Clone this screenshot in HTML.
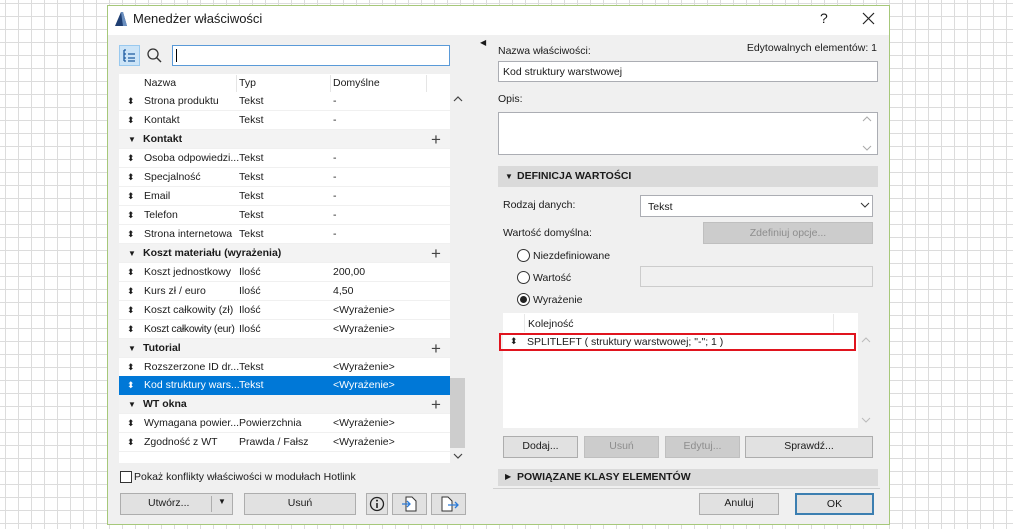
<!DOCTYPE html>
<html><head><meta charset="utf-8">
<style>
*{box-sizing:border-box;margin:0;padding:0}
body{width:1013px;height:529px;overflow:hidden;position:relative;font-family:"Liberation Sans",sans-serif;font-size:10.5px;color:#1a1a1a;
background-color:#fff;background-image:linear-gradient(#dcdcdc 1px,transparent 1px),linear-gradient(90deg,#dcdcdc 1px,transparent 1px);background-size:13px 13px;background-position:5px 3px}
.a{position:absolute}
.dlg{left:107px;top:5px;width:783px;height:520px;background:#f0f0f0;border:1px solid #a6c87a}
.title{left:0;top:0;width:781px;height:29px;background:#fff}
.btn{position:absolute;background:#e1e1e1;border:1px solid #adadad;text-align:center;line-height:19px;font-size:10.5px}
.dis{background:#cccccc;border-color:#bfbfbf;color:#8d8d8d}
.row{position:absolute;left:119px;width:331px;height:19px;background:#fff;border-bottom:1px solid #f0f0f0;line-height:19px}
.row span{position:absolute;white-space:nowrap}
.grp{background:#f3f3f3;font-weight:bold}
.ud{left:8px;font-size:9px;top:0}
.inp{position:absolute;background:#fff;border:1px solid #abadb3}
.sec{position:absolute;background:#dadada;font-weight:bold;line-height:21px;font-size:10.5px}
.rad{position:absolute;width:13px;height:13px;border:1px solid #333;border-radius:50%;background:#fff}
</style></head><body>
<div class="a dlg">
 <div class="a title"></div>
</div>
<svg class="a" style="left:114px;top:11px" width="14" height="16"><path d="M1 15 L7 1 L9 1 L13 15 Z" fill="#1f3f73"/><path d="M7 1 L9 1 L13 15 L9 15Z" fill="#6a8fc0"/></svg>
<div class="a" style="left:133px;top:11px;font-size:13px">Menedżer właściwości</div>
<div class="a" style="left:820px;top:10px;font-size:14px">?</div>
<svg class="a" style="left:862px;top:12px" width="13" height="13"><path d="M1 1L12 12M12 1L1 12" stroke="#222" stroke-width="1.2"/></svg>

<div class="a" style="left:119px;top:45px;width:21px;height:21px;background:#cce4f7;border:1px solid #99c9ef"></div>
<svg class="a" style="left:122px;top:48px" width="15" height="15"><g stroke="#1c5aa0" stroke-width="1.3" fill="none"><path d="M2 2h2M2 6h2M2 10h2M2 13h2M6 6h7M6 10h7M6 13h7M2 2v11"/></g></svg>
<svg class="a" style="left:146px;top:47px" width="16" height="16"><circle cx="7" cy="7" r="5" stroke="#333" stroke-width="1.3" fill="none"/><path d="M10.5 10.5L15 15" stroke="#333" stroke-width="1.4"/></svg>
<div class="inp" style="left:172px;top:45px;width:278px;height:21px;border-color:#5a9ad8"></div>
<div class="a" style="left:176px;top:49px;width:1px;height:13px;background:#000"></div>

<div class="a" style="left:119px;top:74px;width:346px;height:389px;background:#fff"></div>
<div class="a" style="left:450px;top:74px;width:15px;height:389px;background:#f0f0f0"></div>
<div class="a" style="left:450px;top:378px;width:15px;height:70px;background:#cdcdcd"></div>
<svg class="a" style="left:453px;top:95px" width="10" height="8"><path d="M1 6L5 2L9 6" stroke="#444" fill="none" stroke-width="1.2"/></svg>
<svg class="a" style="left:453px;top:452px" width="10" height="8"><path d="M1 2L5 6L9 2" stroke="#444" fill="none" stroke-width="1.2"/></svg>
<div class="row" style="top:74px"><span style="left:25px">Nazwa</span><span style="left:120px">Typ</span><span style="left:214px">Domyślne</span></div>
<div class="a" style="left:236px;top:75px;width:1px;height:17px;background:#e5e5e5"></div>
<div class="a" style="left:330px;top:75px;width:1px;height:17px;background:#e5e5e5"></div>
<div class="a" style="left:426px;top:75px;width:1px;height:17px;background:#e5e5e5"></div>

<div class="row" style="top:92px"><span class="ud">⬍</span><span style="left:25px">Strona produktu</span><span style="left:120px">Tekst</span><span style="left:214px">-</span></div>
<div class="row" style="top:111px"><span class="ud">⬍</span><span style="left:25px">Kontakt</span><span style="left:120px">Tekst</span><span style="left:214px">-</span></div>
<div class="row grp" style="top:130px"><span style="left:9px;font-size:8px">▼</span><span style="left:24px">Kontakt</span><span style="left:312px;font-weight:normal;font-size:17px;color:#444">+</span></div>
<div class="row" style="top:149px"><span class="ud">⬍</span><span style="left:25px">Osoba odpowiedzi...</span><span style="left:120px">Tekst</span><span style="left:214px">-</span></div>
<div class="row" style="top:168px"><span class="ud">⬍</span><span style="left:25px">Specjalność</span><span style="left:120px">Tekst</span><span style="left:214px">-</span></div>
<div class="row" style="top:187px"><span class="ud">⬍</span><span style="left:25px">Email</span><span style="left:120px">Tekst</span><span style="left:214px">-</span></div>
<div class="row" style="top:206px"><span class="ud">⬍</span><span style="left:25px">Telefon</span><span style="left:120px">Tekst</span><span style="left:214px">-</span></div>
<div class="row" style="top:225px"><span class="ud">⬍</span><span style="left:25px">Strona internetowa</span><span style="left:120px">Tekst</span><span style="left:214px">-</span></div>
<div class="row grp" style="top:244px"><span style="left:9px;font-size:8px">▼</span><span style="left:24px">Koszt materiału (wyrażenia)</span><span style="left:312px;font-weight:normal;font-size:17px;color:#444">+</span></div>
<div class="row" style="top:263px"><span class="ud">⬍</span><span style="left:25px">Koszt jednostkowy</span><span style="left:120px">Ilość</span><span style="left:214px">200,00</span></div>
<div class="row" style="top:282px"><span class="ud">⬍</span><span style="left:25px">Kurs zł / euro</span><span style="left:120px">Ilość</span><span style="left:214px">4,50</span></div>
<div class="row" style="top:301px"><span class="ud">⬍</span><span style="left:25px">Koszt całkowity (zł)</span><span style="left:120px">Ilość</span><span style="left:214px">&lt;Wyrażenie&gt;</span></div>
<div class="row" style="top:320px"><span class="ud">⬍</span><span style="left:25px;letter-spacing:-0.3px">Koszt całkowity (eur)</span><span style="left:120px">Ilość</span><span style="left:214px">&lt;Wyrażenie&gt;</span></div>
<div class="row grp" style="top:339px"><span style="left:9px;font-size:8px">▼</span><span style="left:24px">Tutorial</span><span style="left:312px;font-weight:normal;font-size:17px;color:#444">+</span></div>
<div class="row" style="top:358px"><span class="ud">⬍</span><span style="left:25px">Rozszerzone ID dr...</span><span style="left:120px">Tekst</span><span style="left:214px">&lt;Wyrażenie&gt;</span></div>
<div class="row" style="top:376px;background:#0078d7;color:#fff;border:none"><span class="ud">⬍</span><span style="left:25px">Kod struktury wars...</span><span style="left:120px">Tekst</span><span style="left:214px">&lt;Wyrażenie&gt;</span></div>
<div class="row grp" style="top:395px"><span style="left:9px;font-size:8px">▼</span><span style="left:24px">WT okna</span><span style="left:312px;font-weight:normal;font-size:17px;color:#444">+</span></div>
<div class="row" style="top:414px"><span class="ud">⬍</span><span style="left:25px">Wymagana powier...</span><span style="left:120px">Powierzchnia</span><span style="left:214px">&lt;Wyrażenie&gt;</span></div>
<div class="row" style="top:433px"><span class="ud">⬍</span><span style="left:25px">Zgodność z WT</span><span style="left:120px">Prawda / Fałsz</span><span style="left:214px">&lt;Wyrażenie&gt;</span></div>

<div class="a" style="left:120px;top:471px;width:12px;height:12px;background:#fff;border:1px solid #333"></div>
<div class="a" style="left:134px;top:471px">Pokaż konflikty właściwości w modułach Hotlink</div>
<div class="btn" style="left:120px;top:493px;width:113px;height:22px;text-align:left;padding-left:27px">Utwórz...</div>
<div class="a" style="left:211px;top:496px;width:1px;height:16px;background:#adadad"></div>
<div class="a" style="left:218px;top:497px;font-size:8px">▼</div>
<div class="btn" style="left:244px;top:493px;width:112px;height:22px">Usuń</div>
<div class="btn" style="left:366px;top:493px;width:22px;height:22px"></div>
<svg class="a" style="left:369px;top:496px" width="16" height="16"><circle cx="8" cy="8" r="6.5" stroke="#222" stroke-width="1.3" fill="none"/><path d="M8 7v5" stroke="#222" stroke-width="1.6"/><circle cx="8" cy="4.6" r="1" fill="#222"/></svg>
<div class="btn" style="left:392px;top:493px;width:35px;height:22px"></div>
<svg class="a" style="left:401px;top:495px" width="18" height="18"><path d="M5 2h6l4 4v10H5z" fill="#fff" stroke="#333"/><path d="M1 9h8M6 6l3 3-3 3" stroke="#2c7bd8" fill="none" stroke-width="1.3"/></svg>
<div class="btn" style="left:431px;top:493px;width:35px;height:22px"></div>
<svg class="a" style="left:440px;top:495px" width="20" height="18"><path d="M2 2h6l4 4v10H2z" fill="#fff" stroke="#333"/><path d="M8 10h10M15 7l3 3-3 3" stroke="#2c7bd8" fill="none" stroke-width="1.3"/></svg>

<div class="a" style="left:480px;top:38px;font-size:8px">◀</div>

<div class="a" style="left:498px;top:45px">Nazwa właściwości:</div>
<div class="a" style="right:136px;top:42px">Edytowalnych elementów: 1</div>
<div class="inp" style="left:498px;top:61px;width:380px;height:21px;padding:4px 4px">Kod struktury warstwowej</div>
<div class="a" style="left:498px;top:93px">Opis:</div>
<div class="inp" style="left:498px;top:112px;width:380px;height:43px"></div>
<svg class="a" style="left:862px;top:115px" width="10" height="37"><path d="M1 6L5 2L9 6M1 31L5 35L9 31" stroke="#aaa" fill="none"/></svg>
<div class="sec" style="left:498px;top:166px;width:380px;height:21px;padding-left:19px">DEFINICJA WARTOŚCI</div>
<div class="a" style="left:505px;top:172px;font-size:8px">▼</div>
<div class="a" style="left:503px;top:199px">Rodzaj danych:</div>
<div class="inp" style="left:640px;top:195px;width:233px;height:22px;padding:5px 7px">Tekst</div>
<svg class="a" style="left:860px;top:202px" width="10" height="7"><path d="M1 1L5 5L9 1" stroke="#333" fill="none"/></svg>
<div class="a" style="left:503px;top:227px">Wartość domyślna:</div>
<div class="btn dis" style="left:703px;top:222px;width:170px;height:22px;line-height:20px">Zdefiniuj opcje...</div>
<div class="rad" style="left:517px;top:249px"></div><div class="a" style="left:533px;top:250px">Niezdefiniowane</div>
<div class="rad" style="left:517px;top:271px"></div><div class="a" style="left:533px;top:272px">Wartość</div>
<div class="inp" style="left:640px;top:266px;width:233px;height:21px;background:#f0f0f0;border-color:#ccc"></div>
<div class="rad" style="left:517px;top:293px"></div><div class="a" style="left:520px;top:296px;width:7px;height:7px;border-radius:50%;background:#222"></div><div class="a" style="left:533px;top:294px">Wyrażenie</div>
<div class="a" style="left:503px;top:313px;width:355px;height:115px;background:#fff"></div>
<div class="a" style="left:858px;top:313px;width:15px;height:115px;background:#f0f0f0"></div>
<div class="a" style="left:524px;top:314px;width:1px;height:18px;background:#e8e8e8"></div>
<div class="a" style="left:833px;top:314px;width:1px;height:18px;background:#e8e8e8"></div>
<div class="a" style="left:528px;top:318px">Kolejność</div>
<div class="a" style="left:499px;top:333px;width:357px;height:18px;border:2px solid #e0141e"></div>
<div class="a" style="left:510px;top:336px;font-size:9px">⬍</div>
<div class="a" style="left:527px;top:336px">SPLITLEFT ( struktury warstwowej; "-"; 1 )</div>
<svg class="a" style="left:861px;top:336px" width="10" height="38"><path d="M1 6L5 2L9 6" stroke="#bbb" fill="none"/></svg>
<svg class="a" style="left:861px;top:416px" width="10" height="8"><path d="M1 2L5 6L9 2" stroke="#bbb" fill="none"/></svg>
<div class="btn" style="left:503px;top:436px;width:75px;height:22px">Dodaj...</div>
<div class="btn dis" style="left:584px;top:436px;width:75px;height:22px">Usuń</div>
<div class="btn dis" style="left:665px;top:436px;width:75px;height:22px">Edytuj...</div>
<div class="btn" style="left:745px;top:436px;width:128px;height:22px">Sprawdź...</div>
<div class="sec" style="left:498px;top:469px;width:380px;height:17px;line-height:17px;padding-left:19px">POWIĄZANE KLASY ELEMENTÓW</div>
<div class="a" style="left:505px;top:472px;font-size:8px">▶</div>
<div class="a" style="left:493px;top:488px;width:387px;height:1px;background:#d0d0d0"></div>
<div class="btn" style="left:699px;top:493px;width:80px;height:22px">Anuluj</div>
<div class="btn" style="left:795px;top:493px;width:79px;height:22px;border:2px solid #3c7fb1;line-height:18px">OK</div>
</body></html>
